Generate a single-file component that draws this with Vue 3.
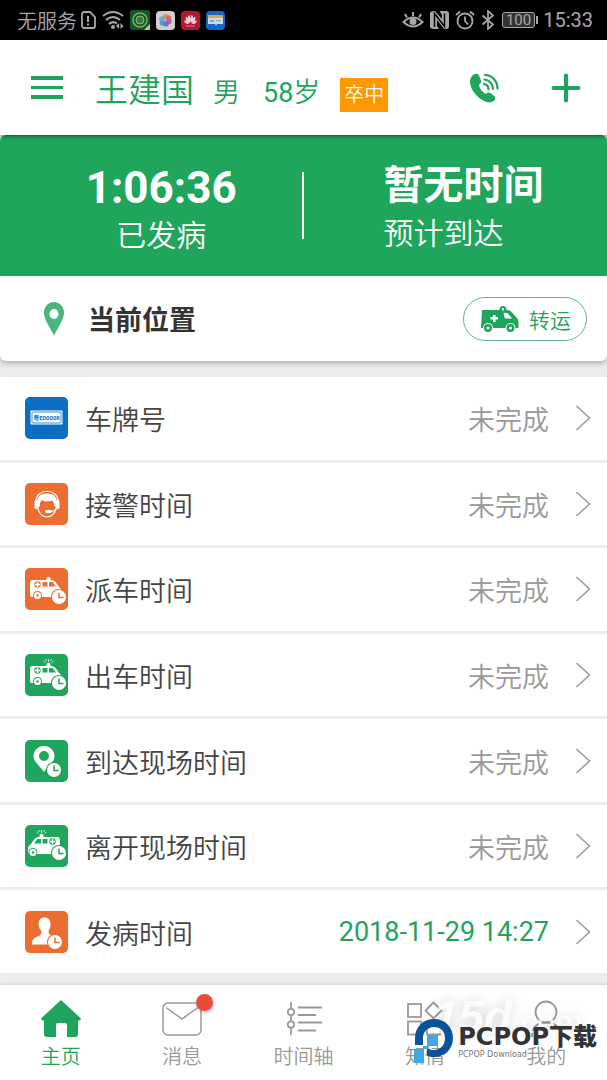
<template>
  <div class="page">
    <div class="status-bar">
      <div class="status-left">
        <span>无服务</span>
        <svg width="16" height="20" viewBox="0 0 16 20" fill="none" stroke="#a8a8a8" stroke-width="1.8">
          <path d="M2 4a2 2 0 0 1 2-2h6l5 5v9a2 2 0 0 1-2 2H4a2 2 0 0 1-2-2z" />
          <path d="M8 6v6M8 13.500v2" stroke-width="2" />
        </svg>
        <svg width="22" height="20" viewBox="0 0 22 20" fill="none" stroke="#a8a8a8" stroke-width="2">
          <path d="M1 6q10-8 20 0M4 10q7-6 14 0M7 14q4-3.500 8-.5" />
          <circle cx="11" cy="17" r="2" fill="#a8a8a8" stroke="none" />
          <path d="M17 13l-3 3 3 3zM18.500 13l3 3-3 3z" fill="#a8a8a8" stroke="none" />
        </svg>
        <svg width="20" height="20" viewBox="0 0 20 20">
          <rect width="20" height="20" rx="3" fill="#0c5a2b" />
          <circle cx="10" cy="10" r="7" fill="none" stroke="#8fa857" stroke-width="1.5" />
          <circle cx="10" cy="10" r="4" fill="#2c7e47" stroke="#a9b66a" />
          <path d="M20 14v6h-6z" fill="#c9c58a" />
        </svg>
        <svg width="19" height="19" viewBox="0 0 19 19">
          <rect width="19" height="19" rx="4" fill="#cfcfd4" />
          <g fill-opacity=".85">
            <circle cx="9.500" cy="5.500" r="2.800" fill="#e0913f" />
            <circle cx="12.500" cy="7" r="2.800" fill="#d8655c" />
            <circle cx="13" cy="10.500" r="2.800" fill="#b45bb0" />
            <circle cx="10" cy="13" r="2.800" fill="#6c61c9" />
            <circle cx="6.500" cy="12" r="2.800" fill="#3e8fd6" />
            <circle cx="6" cy="8" r="2.800" fill="#52a9c9" />
          </g>
        </svg>
        <svg width="19" height="19" viewBox="0 0 19 19">
          <rect width="19" height="19" rx="4" fill="#b5152f" />
          <g fill="#e6d3d6">
            <path d="M9 12C6 9 6 5 8.500 4 10 7 9.500 10 9 12zM10 12c3-3 3-7 .5-8C9 7 9.500 10 10 12z" />
            <path d="M8.500 12.500C5 11 4 8 5 5.500 7.500 7 8.500 10 8.500 12.500zM10.500 12.500C14 11 15 8 14 5.500c-2.500 1.500-3.500 4.500-3.500 7z" />
            <path d="M8 13c-3 .5-4.500-1-5-3.500C5.500 9.500 7 11 8 13zM11 13c3 .5 4.500-1 5-3.500C13.500 9.500 12 11 11 13z" />
            <path d="M5 14.500h9v1H5z" opacity=".6" />
          </g>
        </svg>
        <svg width="19" height="19" viewBox="0 0 19 19">
          <rect width="19" height="19" rx="4" fill="#1467c8" />
          <path d="M2 4h15v4H2z" fill="#d9a649" />
          <path d="M2 7h15v6h-6l-1 2-1-2H2z" fill="#cfd9e4" />
          <path d="M4 9h4v2H4zM10 9h5v1h-5z" fill="#7fa3cd" />
        </svg>
      </div>
      <div class="status-right">
        <svg width="22" height="20" viewBox="0 0 22 20" fill="none" stroke="#a8a8a8" stroke-width="2">
          <path d="M1.500 12q9.500-9 19 0-9.500 9-19 0zM11 6V2M5 7.500L3 4M17 7.500L19 4" />
          <circle cx="11" cy="11.500" r="3.500" fill="#a8a8a8" stroke="none" />
        </svg>
        <svg width="19" height="20" viewBox="0 0 19 20">
          <path d="M4 1h1l7 8V5l-2-3V1h6q3 0 3 3v12q0 3-3 3h-2L7 10v6l2 3H4q-4 0-4-3V4q0-3 4-3z" fill="#a8a8a8" />
          <path d="M4.500 17V3.500l10 13V3.500" fill="none" stroke="#000" stroke-width="1.500" />
        </svg>
        <svg width="20" height="20" viewBox="0 0 20 20" fill="none" stroke="#a8a8a8" stroke-width="1.800">
          <circle cx="10" cy="11" r="7.500" />
          <path d="M10 6.500V11l3 3.500M1 5l4-3.500M19 5l-4-3.500" />
        </svg>
        <svg width="14" height="20" viewBox="0 0 14 20" fill="none" stroke="#a8a8a8" stroke-width="1.700">
          <path d="M1.500 5.500l10.500 9L7 19V1l5 4.500-10.500 9" />
        </svg>
        <span class="battery">100</span>
        <span>15:33</span>
      </div>
    </div>

    <header class="header">
      <button aria-label="菜单">
        <svg width="32" height="24" viewBox="0 0 32 24" fill="#1fa45c">
          <path d="M0 0h32v4H0zM0 10h32v3H0zM0 19h32v4H0z" />
        </svg>
      </button>
      <div class="patient">
        <h1>王建国</h1>
        <span>男</span>
        <span><b>58</b>岁</span>
        <em>卒中</em>
      </div>
      <div class="header-actions">
        <button aria-label="电话">
          <svg width="30" height="30" viewBox="0 0 30 30">
            <path fill="#1fa45c" d="M3.500 1.500C5.500 0 8 .5 9 2.500l2 5c.5 2-.5 3-2 4.200C9.500 16 12.500 19 16 21c1.500-1.500 3-1.800 4.700-.8l3.500 2.800c1.500 1.500 1.300 3.200 0 4.500C22 29.500 19 30 16.500 29 8 26 0 17 0 8.500 0 5.500 1.500 3 3.500 1.500z" />
            <path fill="none" stroke="#1fa45c" stroke-width="2.200" stroke-linecap="round" d="M15 2C22 2 27.500 8 27.500 15.500M14.500 6.500C19 7 23 11 23 16M14 11c3 .5 4.500 2.500 4.500 5.500" />
          </svg>
        </button>
        <button aria-label="添加">
          <svg width="30" height="30" viewBox="0 0 30 30" stroke="#1fa45c" stroke-width="4" stroke-linecap="round">
            <path d="M15 2.500v25M2.500 15h25" />
          </svg>
        </button>
      </div>
    </header>

    <main class="content">
      <section class="card">
        <div class="hero">
          <div class="hero-col elapsed">
            <strong>1:06:36</strong>
            <span>已发病</span>
          </div>
          <div class="hero-line"></div>
          <div class="hero-col arrival">
            <strong>暂无时间</strong>
            <span>预计到达</span>
          </div>
        </div>
        <div class="location">
          <svg width="20" height="34" viewBox="0 0 20 34">
            <path fill="#4bb57d" fill-rule="evenodd" d="M10 0c5.500 0 10 4.500 10 10.500C20 17 15 24 10 33.500 5 24 0 17 0 10.500 0 4.500 4.500 0 10 0zm0 7a4.500 5 0 1 0 0 10 4.500 5 0 1 0 0-10z" />
          </svg>
          <h2>当前位置</h2>
          <button class="transfer">
            <svg width="38" height="26" viewBox="0 0 38 26">
              <path fill="#1fa45c" d="M1 4h17.500V3.500C18.500 1.500 20 0 22 0s3.500 1.500 3.500 3.500V4c2 0 3.500.5 5 2l5 5.500c1.500 1.500 2 3 2 5V22h-3a5 5 0 0 0-10 0H12a5 5 0 0 0-10 0H0z" />
              <path fill="#fff" d="M22.500 7h4l4.500 5.500h-7zM12 9h2.500v2H17v2.500h-2.500V16H12v-2.500H9.500V11H12zM21 2h2v2.500h-2z" />
              <circle cx="7" cy="22" r="2.800" fill="#fff" stroke="#1fa45c" stroke-width="2.400" />
              <circle cx="29.500" cy="22" r="2.800" fill="#fff" stroke="#1fa45c" stroke-width="2.400" />
            </svg>
            转运
          </button>
        </div>
      </section>

      <ul class="list">
        <li v-for="item in items" :key="item.label">
          <button class="row">
            <svg class="tile" :class="item.color" width="43" height="42" viewBox="0 0 43 42">
              <g v-if="item.icon === 'plate'">
                <rect x="5.500" y="13.500" width="32" height="14" rx="1" fill="#fff" />
                <rect x="7" y="15" width="29" height="11" rx="1" fill="none" stroke="#0a6fc2" stroke-width=".8" />
                <text x="21.500" y="22.500" text-anchor="middle" class="plate-text">粤E00008</text>
              </g>
              <g v-else-if="item.icon === 'agent'">
                <path d="M11 18C11 5 33 5 33 18" fill="none" stroke="#fff" stroke-width="1.200" />
                <path d="M12.500 24C14 31 18 34 22 34s8-3 9.500-10" fill="none" stroke="#fff" stroke-width="1.200" />
                <path d="M12.500 24C10.500 15 14 10.500 22 10.500S33.500 15 31.500 24l-2.500-1c.5-2.500-.5-4-2-5.500-4 1.500-7 1.500-10-.5-2 2-2.500 4-2 6.500z" fill="#fff" />
                <rect x="9.500" y="17" width="3.500" height="9" rx="1.700" fill="#fff" />
                <rect x="31" y="17" width="3.500" height="9" rx="1.700" fill="#fff" />
                <path d="M32.500 24q-2 4.500-8 4.500" fill="none" stroke="#fff" stroke-width="1.200" />
                <ellipse cx="23.500" cy="28.500" rx="3.500" ry="1.700" fill="#fff" />
              </g>
              <path v-else-if="item.icon === 'place'" fill="#fff" fill-rule="evenodd" d="M19 6c6 0 10.500 4.500 10.500 10.500C29.500 21 24 25 19 32 14 25 8.500 21 8.500 16.500 8.500 10.500 13 6 19 6zm0 5a5 5 0 1 0 0 10 5 5 0 1 0 0-10z" />
              <path v-else-if="item.icon === 'person'" fill="#fff" d="M19.500 6.500c4 0 6 2.500 6 7 0 3-1 4.500-2 6.500 0 2.500 1 3.500 3 4.500l6 3v6H7c0-4 1-6 4.500-7.500 3.500-1.500 5-2.500 5-5.500-1-2-3-4-3-7 0-4.500 2-7 6-7z" />
              <g v-else :transform="item.flip ? 'translate(40 0) scale(-1 1)' : null">
                <path fill="#fff" d="M8 12h18q3 0 4.500 2l4 5.500q2.500 1.500 2.500 4V27q0 2-2 2H7q-2 0-2-2V15q0-3 3-3z" />
                <rect x="21.500" y="9" width="4" height="4" rx="1.500" fill="#fff" />
                <circle cx="12.500" cy="16.500" r="3.200" class="glass" />
                <path d="M12.500 14v5M10 16.500h5" stroke="#fff" stroke-width="1.500" />
                <path class="glass" d="M17.500 14h5v4.500h-5zM24 14h3.500l3.500 4.500h-7z" />
                <circle :cx="item.flip ? 32 : 12.5" cy="27.500" r="4.500" class="glass" />
                <circle :cx="item.flip ? 32 : 12.5" cy="27.500" r="3.500" fill="#fff" />
                <circle :cx="item.flip ? 32 : 12.5" cy="27.500" r="1.200" class="glass" />
                <path v-if="item.siren" d="M23.500 8V5M20.500 8.500l-2-1.500M26.500 8.500l2-1.500M21.500 7l-1-2M25.500 7l1-2" stroke="#fff" stroke-width=".8" />
              </g>
              <g v-if="item.clock" :transform="`translate(${item.clock})`">
                <circle r="8" class="glass" />
                <circle r="7" fill="#fff" />
                <path d="M0-4.500V0.500H4.500" class="hands" />
              </g>
            </svg>
            <span class="label">{{ item.label }}</span>
            <span class="value" :class="{ done: item.done }">{{ item.value }}</span>
            <svg width="16" height="26" viewBox="0 0 16 26" fill="none" stroke="#999" stroke-width="1.500">
              <path d="M1.500 1l13 12-13 12" />
            </svg>
          </button>
        </li>
      </ul>
    </main>

    <nav class="tabs">
      <a href="#" class="active">
        <svg width="40" height="38" viewBox="0 0 40 38">
          <path fill="#1fa45c" d="M20 0l20 18.500-1 2H37V34q0 3-3 3h-8V25q0-2-2-2h-7q-2 0-2 2v12H6q-3 0-3-3V20.500H1l-1-2z" />
        </svg>
        主页
      </a>
      <a href="#">
        <span class="mail">
          <svg width="40" height="38" viewBox="0 0 40 38" fill="none" stroke="#999" stroke-width="1.500">
            <rect x="1" y="3" width="38" height="32" rx="5" />
            <path d="M4 7.500l16 11.500 16-11.500" />
          </svg>
          <i class="dot"></i>
        </span>
        消息
      </a>
      <a href="#">
        <svg width="40" height="38" viewBox="0 0 40 38" fill="none" stroke="#999" stroke-width="1.800">
          <path d="M7 2v6.500M7 15v6M7 28v7M14 7.500h24M14 15h18M14 22.500h24M14 30.500h18" />
          <circle cx="7" cy="12" r="3.200" />
          <circle cx="7" cy="24.500" r="3.200" />
        </svg>
        时间轴
      </a>
      <a href="#">
        <svg width="40" height="38" viewBox="0 0 40 38" fill="none" stroke="#999" stroke-width="1.800">
          <rect x="3" y="4" width="13" height="13" />
          <rect x="3" y="21.500" width="13" height="13" />
          <rect x="22" y="21.500" width="13" height="13" />
          <path d="M28.500 2.500l8 8-8 8-8-8z" />
        </svg>
        知情
      </a>
      <a href="#">
        <svg width="40" height="38" viewBox="0 0 40 38" fill="none" stroke="#999" stroke-width="1.800">
          <circle cx="20" cy="12" r="10.500" />
          <path d="M6 37q0-14.500 14-14.500T34 37" />
        </svg>
        我的
      </a>
    </nav>

    <div class="ghost"><b>15d</b>.com</div>
    <div class="brand">
      <svg width="40" height="44" viewBox="0 0 40 44">
        <path fill="#0b529c" d="M20 0c11 0 19 8 19 19s-8 19-19 19c-3 0-5-.5-7-1.500V29c2 1.500 4 2 7 2 6.500 0 11-5 11-12S26.500 8 20 8 9 13 9 19v7H1v-7C1 8 9 0 20 0z" />
        <path fill="#3fa9e8" d="M13 16h11v11H14v3h-4v14H0V30h9v-3h4z" />
      </svg>
      <div>
        <p class="brand-name">PCPOP<span>下载</span></p>
        <p class="brand-sub">PCPOP Download</p>
      </div>
    </div>
  </div>
</template>

<script setup>
import { ref } from 'vue'

const items = ref([
  { label: '车牌号', value: '未完成', icon: 'plate', color: 'blue' },
  { label: '接警时间', value: '未完成', icon: 'agent', color: 'orange' },
  { label: '派车时间', value: '未完成', icon: 'car', color: 'orange', clock: '34,29' },
  { label: '出车时间', value: '未完成', icon: 'car', color: 'green', siren: true, clock: '34,29' },
  { label: '到达现场时间', value: '未完成', icon: 'place', color: 'green', clock: '29,30' },
  { label: '离开现场时间', value: '未完成', icon: 'car', color: 'green', siren: true, flip: true, clock: '34,28' },
  { label: '发病时间', value: '2018-11-29 14:27', icon: 'person', color: 'orange', clock: '30,31', done: true }
])
</script>

<style>
body {
  margin: 0;
}
</style>

<style scoped>
.page {
  position: relative;
  display: flex;
  flex-direction: column;
  min-height: 100vh;
  background: #ededed;
  font-family: Roboto, "Noto Sans CJK SC", sans-serif;
  font-weight: 350;
  color: #444;
}

h1, h2, p, ul {
  margin: 0;
  padding: 0;
}

svg {
  display: block;
  flex-shrink: 0;
}

button {
  font: inherit;
  color: inherit;
  background: none;
  border: 0;
  padding: 0;
  cursor: pointer;
}

.status-bar {
  display: flex;
  align-items: center;
  justify-content: space-between;
  height: 40px;
  padding: 0 14px 0 17px;
  background: #000;
  color: #a8a8a8;
  font-size: 20px;
}

.status-left {
  display: flex;
  align-items: center;
  gap: 6px;
}

.status-left span {
  margin-right: -3px;
}

.status-right {
  display: flex;
  align-items: center;
  gap: 6px;
  font-weight: 400;
}

.battery {
  position: relative;
  margin: 0 2px 0 1px;
  padding: 0 3px;
  border: 1px solid #a8a8a8;
  border-radius: 3px;
  background: #333;
  font-size: 15px;
  line-height: 14px;
}

.battery::after {
  content: "";
  position: absolute;
  top: 3px;
  right: -4px;
  width: 2px;
  height: 8px;
  background: #a8a8a8;
}

.header {
  position: relative;
  z-index: 1;
  display: flex;
  align-items: center;
  height: 95px;
  padding: 0 26px 0 31px;
  background: #fff;
  box-shadow: 0 1px 4px rgba(0, 0, 0, 0.5);
  color: #1fa45c;
}

.patient {
  display: flex;
  align-items: baseline;
  margin-left: 32px;
  font-size: 27px;
}

.patient h1 {
  margin-right: 19px;
  font-size: 33px;
  font-weight: 350;
}

.patient span {
  margin-right: 23px;
}

.patient span + span {
  margin-right: 20px;
}

.patient b {
  font-weight: 400;
}

.patient em {
  padding: 0 4px;
  background: #ff9800;
  color: #fff;
  font-size: 20px;
  font-style: normal;
  line-height: 34px;
}

.header-actions {
  display: flex;
  gap: 51px;
  margin-left: auto;
}

.content {
  flex: 1;
  display: flex;
  flex-direction: column;
}

.card {
  border-radius: 6px;
  overflow: hidden;
  background: #fff;
  box-shadow: 0 2px 6px rgba(0, 0, 0, 0.3);
}

.hero {
  display: flex;
  align-items: center;
  height: 141px;
  background: #1fa65c;
  color: #fff;
}

.hero-line {
  width: 2px;
  height: 67px;
  flex-shrink: 0;
  background: #fff;
}

.hero-col {
  width: 50%;
  display: flex;
  flex-direction: column;
  box-sizing: border-box;
}

.hero-col strong {
  font-weight: 700;
  line-height: 50px;
}

.hero-col span {
  font-size: 30px;
  line-height: 46px;
}

.elapsed {
  align-items: center;
  padding: 10px 0 0 20px;
}

.elapsed strong {
  font-size: 44px;
}

.arrival {
  padding: 6px 0 0 79px;
}

.arrival strong {
  font-size: 40px;
}

.location {
  display: flex;
  align-items: center;
  height: 85px;
  padding: 0 20px 0 44px;
}

.location h2 {
  margin-left: 24px;
  font-size: 27px;
  font-weight: 700;
  color: #333;
}

.transfer {
  display: flex;
  align-items: center;
  gap: 10px;
  height: 44px;
  margin-left: auto;
  padding: 0 15px 0 17px;
  border: 1px solid #5fb98a;
  border-radius: 22px;
  color: #1fa45c;
  font-size: 21px;
}

.list {
  flex: 1;
  display: flex;
  flex-direction: column;
  gap: 3px;
  margin: 16px 0 12px;
  list-style: none;
}

.list li {
  flex: 1;
  display: flex;
  background: #fff;
}

.row {
  flex: 1;
  display: flex;
  align-items: center;
  padding: 0 16px 0 25px;
  font-size: 27px;
  text-align: left;
}

.tile {
  border-radius: 5px;
  background: var(--tile);
}

.blue {
  --tile: #0a6fc2;
}

.orange {
  --tile: #ec6d30;
}

.green {
  --tile: #1fa65c;
}

.glass {
  fill: var(--tile);
}

.hands {
  fill: none;
  stroke: var(--tile);
  stroke-width: 1.5px;
}

.plate-text {
  fill: #0a6fc2;
  font-size: 6px;
  font-weight: 700;
}

.label,
.value {
  padding-top: 1px;
}

.label {
  margin-left: 17px;
}

.value {
  margin: 0 26px 0 auto;
  color: #999;
}

.value.done {
  color: #1fa45c;
  font-weight: 400;
}

.tabs {
  display: flex;
  height: 95px;
  background: #fff;
  box-shadow: 0 -1px 3px rgba(0, 0, 0, 0.12);
}

.tabs a {
  flex: 1;
  display: flex;
  flex-direction: column;
  align-items: center;
  padding-top: 15px;
  color: #999;
  font-size: 20px;
  line-height: 38px;
  text-decoration: none;
}

.tabs .active {
  color: #1fa45c;
}

.mail {
  position: relative;
}

.dot {
  position: absolute;
  top: -6px;
  right: -11px;
  width: 17px;
  height: 17px;
  border-radius: 50%;
  background: #e84c3d;
  box-shadow: 1px 2px 3px rgba(0, 0, 0, 0.25);
}

.ghost {
  position: absolute;
  right: 24px;
  bottom: 34px;
  color: rgba(255, 255, 255, 0.85);
  font-family: "Liberation Serif", serif;
  font-size: 36px;
  line-height: 50px;
  text-shadow: 0 0 12px rgba(0, 0, 0, 0.18);
}

.ghost b {
  font-family: "Liberation Sans", sans-serif;
  font-size: 46px;
  font-style: italic;
}

.brand {
  position: absolute;
  right: 10px;
  bottom: 17px;
  display: flex;
  align-items: center;
  gap: 4px;
}

.brand-name {
  color: #333;
  font-family: "DejaVu Sans", sans-serif;
  font-size: 24px;
  font-weight: 700;
  line-height: 26px;
}

.brand-name span {
  font-family: "Noto Sans CJK SC", sans-serif;
  font-weight: 900;
}

.brand-sub {
  color: #777;
  font-family: "DejaVu Sans", sans-serif;
  font-size: 8px;
  font-weight: 400;
  line-height: 10px;
}
</style>
